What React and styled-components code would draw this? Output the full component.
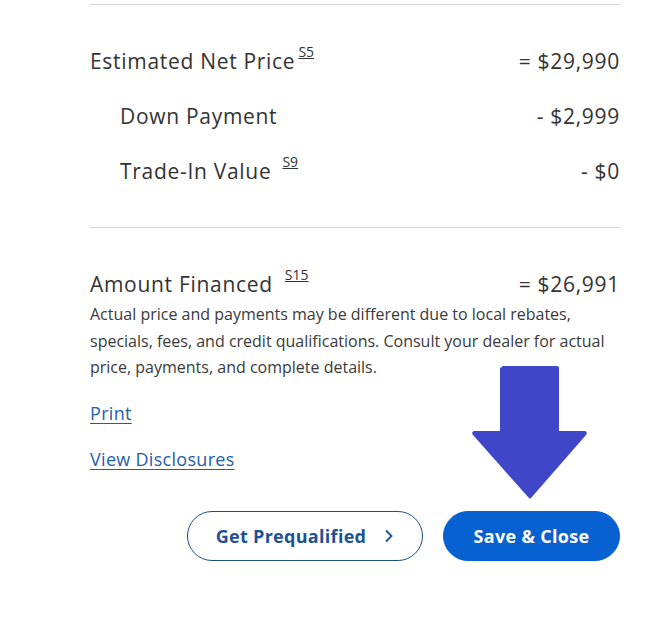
import styled, { createGlobalStyle } from "styled-components"

const Global = createGlobalStyle`
  body {
    margin: 0;
    background: #ffffff;
    font-family: "Open Sans", "Noto Sans", sans-serif;
    color: #333333;
  }
`

const Page = styled.div`
  position: relative;
  width: 657px;
  height: 621px;
  padding: 4px 37px 0 90px;
  box-sizing: border-box;
`

const Divider = styled.hr`
  margin: 0;
  border: none;
  border-top: 1px solid #d6d6d6;
`

const Section = styled.div`
  display: flex;
  flex-direction: column;
  padding: ${p => p.$pad};
`

const Row = styled.div`
  display: flex;
  justify-content: space-between;
  align-items: baseline;
  height: ${p => p.$h || 55}px;
  line-height: 30px;
  font-size: 21px;
  letter-spacing: 0.7px;
  padding-left: ${p => (p.$indent ? 30 : 0)}px;
`

const Label = styled.span`
  display: flex;
  align-items: flex-start;
`

const Sup = styled.a`
  font-size: 14px;
  line-height: 16px;
  color: #333333;
  text-decoration: underline;
  letter-spacing: 0;
  margin-left: ${p => p.$gap}px;
  margin-top: -2px;
`

const Note = styled.p`
  margin: 0;
  font-size: 16px;
  line-height: 26.5px;
  letter-spacing: 0;
  color: #3a3a3a;
`

const Links = styled.div`
  display: flex;
  flex-direction: column;
  align-items: flex-start;
  gap: 22px;
  margin-top: 20px;
`

const TextLink = styled.a`
  font-size: 18px;
  line-height: 24px;
  letter-spacing: 0.3px;
  color: #1f5ea8;
  text-decoration: underline;
  text-underline-offset: 3px;
`

const Actions = styled.div`
  display: flex;
  justify-content: flex-end;
  gap: 20px;
  margin-top: 40px;
`

const Button = styled.button`
  height: 50px;
  border-radius: 25px;
  font-family: "Open Sans", "Noto Sans", sans-serif;
  font-weight: 700;
  font-size: 18px;
  letter-spacing: 0.3px;
  display: flex;
  align-items: center;
  justify-content: center;
  gap: 18px;
  box-sizing: border-box;
  padding: 0;
  width: ${p => p.$w}px;
  border: 1px solid ${p => (p.$primary ? "#0761d1" : "#1c4f86")};
  background: ${p => (p.$primary ? "#0761d1" : "#ffffff")};
  color: ${p => (p.$primary ? "#ffffff" : "#1c5196")};
`

const Arrow = styled.svg`
  position: absolute;
  left: 470px;
  top: 365px;
`

const App = () => {
  return (
    <>
      <Global />
      <Page>
        <Divider />
        <Section $pad="41px 0 41px">
          <Row>
            <Label>
              Estimated Net Price<Sup $gap={3}>S5</Sup>
            </Label>
            <span>= $29,990</span>
          </Row>
          <Row $indent>
            <Label>Down Payment</Label>
            <span>- $2,999</span>
          </Row>
          <Row $indent $h={30}>
            <Label>
              Trade-In Value<Sup $gap={11}>S9</Sup>
            </Label>
            <span>- $0</span>
          </Row>
        </Section>
        <Divider />
        <Section $pad="41px 0 0">
          <Row $h={32}>
            <Label>
              Amount Financed<Sup $gap={12}>S15</Sup>
            </Label>
            <span>= $26,991</span>
          </Row>
          <Note>
            Actual price and payments may be different due to local rebates,
            specials, fees, and credit qualifications. Consult your dealer for
            actual price, payments, and complete details.
          </Note>
          <Links>
            <TextLink href="#">Print</TextLink>
            <TextLink href="#">View Disclosures</TextLink>
          </Links>
          <Actions>
            <Button $w={236}>
              Get Prequalified
              <svg width="10" height="14" viewBox="0 0 10 14">
                <path d="M2 1.5 L7.5 7 L2 12.5" fill="none" stroke="#1c5196" strokeWidth="1.8" />
              </svg>
            </Button>
            <Button $primary $w={177}>Save &amp; Close</Button>
          </Actions>
        </Section>
        <Arrow width="120" height="136" viewBox="0 0 120 136">
          <path
            d="M32 2 Q32 1 33 1 L87 1 Q89 1 89 3 L89 66 L115 66 Q118 67 116 70 L61 133 Q60 134 59 133 L3 70 Q1 67 4 66 L30 66 L30 3 Z"
            fill="#4046c8"
          />
        </Arrow>
      </Page>
    </>
  )
}

export default App
